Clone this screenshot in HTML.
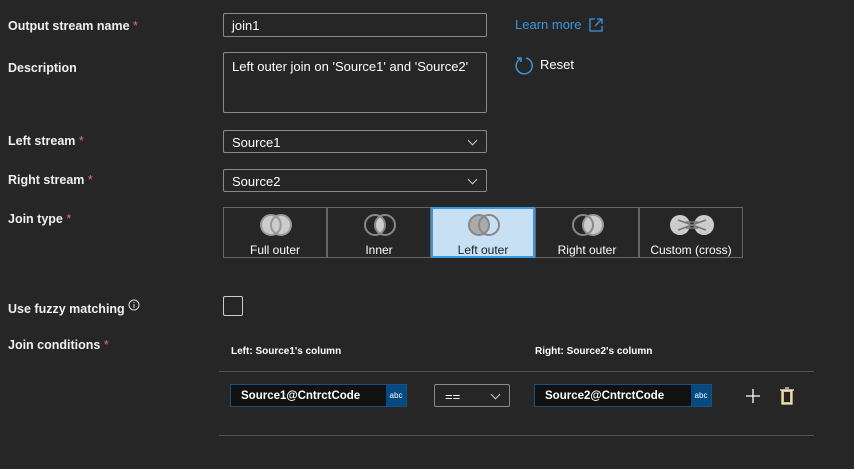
<!DOCTYPE html>
<html><head><style>
body{margin:0;width:854px;height:469px;background:#262626;font-family:"Liberation Sans",sans-serif;color:#fff;position:relative;overflow:hidden;font-size:13px}
.a{position:absolute}
.lbl{font-weight:bold;font-size:12.5px;color:#f0f0f0}
.req{color:#e07070;font-weight:normal}
.box{position:absolute;border:1px solid #8a8a8a;border-radius:2px;background:#262626;box-sizing:border-box;font-size:13px;color:#fff;padding-left:8px}
.chev{position:absolute;right:10px;top:6px;width:6px;height:6px;border-right:1px solid #ccc;border-bottom:1px solid #ccc;transform:rotate(45deg)}
.tile{position:absolute;top:207px;width:104px;height:51px;box-sizing:border-box;border:1px solid #666;text-align:center;font-size:12px;color:#fff}
.tile svg{position:absolute;left:33px;top:3px}
.tile span{position:absolute;left:0;right:0;top:35px}
.ci{position:absolute;top:384px;height:23px;background:#111;border:1px solid #1b4f80;box-sizing:border-box;font-weight:bold;font-size:11.5px;padding:5px 0 0 10px;white-space:nowrap}
.abc{position:absolute;right:0;top:0;bottom:0;width:20px;background:#034a80;font-size:8px;font-weight:normal;text-align:center;line-height:21px}
</style></head><body>
<div class="a lbl" style="left:8px;top:19px">Output stream name <span class="req">*</span></div>
<div class="box" style="left:223px;top:13px;width:264px;height:24px;padding-top:4px">join1</div>
<div class="a" style="left:515px;top:17px;color:#3a96dd;font-size:13px">Learn more</div>
<svg class="a" style="left:589px;top:18px" width="14" height="14" viewBox="0 0 14 14"><path d="M6 1H1v12h12V8M8 1h5v5M13 1L6 8" stroke="#3a96dd" stroke-width="1.3" fill="none"/></svg>
<div class="a lbl" style="left:8px;top:61px">Description</div>
<div class="box" style="left:223px;top:52px;width:264px;height:61px;padding-top:6px">Left outer join on 'Source1' and 'Source2'</div>
<svg class="a" style="left:514px;top:55px" width="20" height="20" viewBox="0 0 20 20"><path d="M6 4A8 8 0 1 0 12 3" stroke="#3a96dd" stroke-width="1.5" fill="none"/><path d="M3 3h4v4" stroke="#3a96dd" stroke-width="1.5" fill="none"/></svg>
<div class="a" style="left:540px;top:57px;font-size:13px">Reset</div>
<div class="a lbl" style="left:8px;top:134px">Left stream <span class="req">*</span></div>
<div class="box" style="left:223px;top:130px;width:264px;height:23px;padding-top:4px">Source1<div class="chev"></div></div>
<div class="a lbl" style="left:8px;top:173px">Right stream <span class="req">*</span></div>
<div class="box" style="left:223px;top:169px;width:264px;height:23px;padding-top:4px">Source2<div class="chev"></div></div>
<div class="a lbl" style="left:8px;top:212px">Join type <span class="req">*</span></div>
<div class="tile" style="left:223px"><svg width="38" height="28"><circle cx="14" cy="14" r="10" fill="#ccc" stroke="#999" stroke-width="2"/><circle cx="24" cy="14" r="10" fill="#ccc" stroke="#999" stroke-width="2"/><path d="M19 5.5A10 10 0 0 1 19 22.5" stroke="#999" stroke-width="2" fill="none"/></svg><span>Full outer</span></div>
<div class="tile" style="left:327px"><svg width="38" height="28"><path d="M19 5.5A10 10 0 0 1 19 22.5A10 10 0 0 1 19 5.5" fill="#ccc"/><circle cx="14" cy="14" r="10" fill="none" stroke="#888" stroke-width="2"/><circle cx="24" cy="14" r="10" fill="none" stroke="#888" stroke-width="2"/></svg><span>Inner</span></div>
<div class="tile" style="left:431px;background:#c7e0f4;border:2px solid #3a96dd;color:#222"><svg width="38" height="28" style="left:32px;top:2px"><circle cx="14" cy="14" r="10" fill="#aaa" stroke="#888" stroke-width="2"/><circle cx="24" cy="14" r="10" fill="none" stroke="#888" stroke-width="2"/></svg><span style="top:34px">Left outer</span></div>
<div class="tile" style="left:535px"><svg width="38" height="28"><circle cx="24" cy="14" r="10" fill="#ccc" stroke="#999" stroke-width="2"/><circle cx="14" cy="14" r="10" fill="none" stroke="#888" stroke-width="2"/></svg><span>Right outer</span></div>
<div class="tile" style="left:639px"><svg width="48" height="28" style="left:28px"><circle cx="12" cy="14" r="10" fill="#ccc"/><circle cx="36" cy="14" r="10" fill="#ccc"/><path d="M10 9L38 19M10 19L38 9M18 11h12M18 17h12" stroke="#777" stroke-width="1.6"/></svg><span>Custom (cross)</span></div>
<div class="a lbl" style="left:8px;top:302px">Use fuzzy matching</div>
<svg class="a" style="left:128px;top:299px" width="12" height="12"><circle cx="6" cy="6" r="5" fill="none" stroke="#ddd"/><path d="M6 5v4M6 3v1" stroke="#ddd"/></svg>
<div class="a" style="left:223px;top:296px;width:18px;height:18px;border:1px solid #ccc;border-radius:2px"></div>
<div class="a lbl" style="left:8px;top:338px">Join conditions <span class="req">*</span></div>
<div class="a" style="left:231px;top:346px;font-size:10px;font-weight:bold">Left: Source1's column</div>
<div class="a" style="left:535px;top:346px;font-size:10px;font-weight:bold">Right: Source2's column</div>
<div class="a" style="left:219px;top:371px;width:595px;height:1px;background:#555"></div>
<div class="a" style="left:219px;top:435px;width:595px;height:1px;background:#555"></div>
<div class="ci" style="left:230px;width:177px">Source1@CntrctCode<div class="abc">abc</div></div>
<div class="box" style="left:434px;top:384px;width:76px;height:23px;padding-top:4px;padding-left:10px">==<div class="chev"></div></div>
<div class="ci" style="left:534px;width:178px">Source2@CntrctCode<div class="abc">abc</div></div>
<svg class="a" style="left:745px;top:388px" width="16" height="16"><path d="M8 1v14M1 8h14" stroke="#fff" stroke-width="1.3"/></svg>
<svg class="a" style="left:779px;top:386px" width="16" height="20"><rect x="3" y="4" width="10" height="14" fill="#e8c060" stroke="#eee" stroke-width="1.2"/><rect x="5" y="6" width="6" height="10" fill="#222"/><path d="M1 4h14M6 2h4" stroke="#eee" stroke-width="1.3"/></svg>
</body></html>
